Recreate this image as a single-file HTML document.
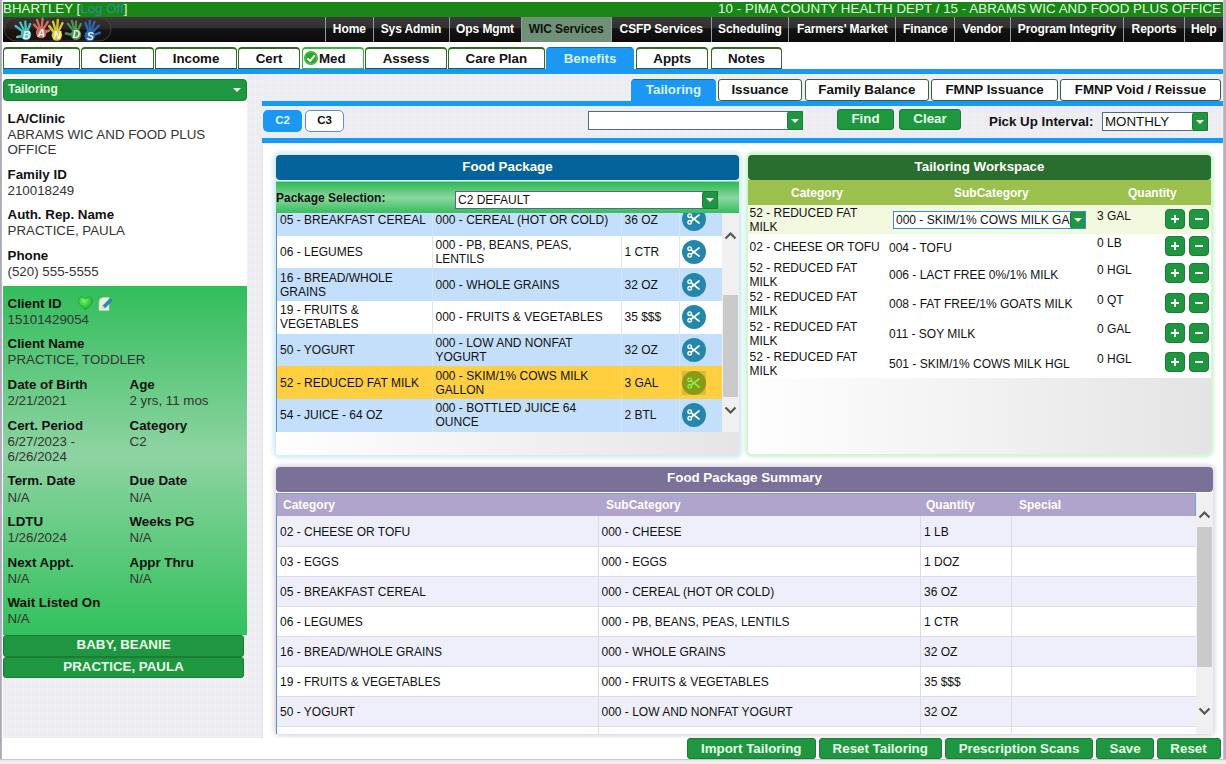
<!DOCTYPE html>
<html lang="en">
<head>
<meta charset="utf-8">
<title>HANDS - Tailoring</title>
<style>
*{box-sizing:border-box;}
html,body{margin:0;padding:0;}
body{width:1226px;height:764px;overflow:hidden;background:#fff;position:relative;
 font-family:"Liberation Sans",sans-serif;font-size:13.333px;color:#222;line-height:normal;}
.abs{position:absolute;}
#edgeL{left:0;top:0;width:2.4px;height:759px;background:linear-gradient(90deg,#a9a9b6,#b8b8c4);}
#edgeB{left:0;top:759.4px;width:1226px;height:5px;background:linear-gradient(#c4c4c6 0,#c9c9cb 1px,#eeeeee 1.6px,#f0f0f0 100%);}
#edgeR{left:1223px;top:0;width:3px;height:759.4px;background:linear-gradient(90deg,#c9c9d8,#b4b4c6 40%,#b0b0c0);}
#gbar{left:3px;top:2px;width:1220px;height:15px;background:#1a8618;color:#deffde;font-size:13.333px;line-height:14px;white-space:nowrap;}
#gbar .r{position:absolute;right:2px;top:0;letter-spacing:.045px;}
#gbar a{color:#2a8f93;text-decoration:none;}
#dbar{left:3px;top:16.6px;width:1220px;height:25px;background:linear-gradient(#3b3b3b 0,#303030 42%,#141212 48%,#0c0b0b 100%);overflow:hidden;}
#nav{position:absolute;left:0;top:0;height:25px;width:1220px;}
#nav span{position:absolute;top:0;text-align:center;display:block;height:25px;line-height:24px;padding:0;letter-spacing:-0.1px;border-left:1px solid #9a9a9a;color:#fff;font-weight:bold;font-size:12px;white-space:nowrap;}
#nav span.on{background:#6f9177;color:#111;}
/* main tabs */
#tabs{left:3px;top:47px;height:22px;width:1220px;}
.tab{position:absolute;top:0;text-align:center;height:22px;padding:0;border:1px solid #2f6b22;border-top:2px solid #2f6b22;border-bottom:1px solid #15605c;border-radius:4px 4px 0 0;background:#fff;
 font-weight:bold;font-size:13.333px;line-height:19px;color:#111;white-space:nowrap;}
.tab.on{background:#1b98f3;border-color:#1b98f3;border-top:1px solid #0f6fa8;color:#d8f3ff;line-height:21px;}
#subtabs .tab.on{line-height:20px;}
.band{background:#1b98f3;box-shadow:0 1px 0 #d4f5ff,0 -1px 0 #d4f5ff;}
.gridbg{background-color:#ececf1;background-image:linear-gradient(rgba(255,255,255,.2) 1px,transparent 1px),linear-gradient(90deg,rgba(255,255,255,.24) 1px,transparent 1px);background-size:8px 8px;}

/* sidebar */
#side{left:3px;top:74px;width:259px;height:663.5px;background-position:4px 6px;}
#sdd{left:3px;top:79px;width:244px;height:22px;background:#1f9640;border:1px solid #1b7d33;border-radius:4px;color:#e4ffe4;font-weight:bold;font-size:12px;line-height:18px;padding-left:4px;}
#sdd:after{content:"";position:absolute;right:5px;top:8px;border:4px solid transparent;border-top:4px solid #fff;border-bottom:none;}
#fam{left:3px;top:101px;width:244px;height:185px;background:#fff;padding:9.6px 0 0 4.5px;}
#cli{overflow:hidden;left:3px;top:286px;width:244px;height:349px;padding:9.6px 0 0 4.5px;background:linear-gradient(#31bd5b 0,#8ed4a2 48%,#31c15c 100%);}
.f{margin:0 0 9.3px 0;line-height:15.333px;color:#333;}
.f b{display:block;color:#111;padding-bottom:.7px;}
.row{display:flex;}
.row .f{width:122px;flex:none;}
.pbtn{left:3.3px;width:240.5px;height:21px;background:#1f9640;border:1px solid #1b7d33;border-radius:3px;color:#e9ffe9;font-weight:bold;font-size:13.333px;line-height:19px;text-align:center;}

/* main */
#mainbg{left:262px;top:143px;width:961px;height:595px;background:#fff;border-left:1px solid #e2e2e8;}
#subtabs{left:3px;top:79px;height:22px;width:1220px;z-index:2;}
.tab.sub{border:1px solid #3f5f38;border-radius:3px;height:22px;line-height:19px;}
#subtabs .tab.on{border-radius:4px 4px 0 0;}
.tab.med{border-color:#3cb33c;text-align:left;padding-left:16px;}
.btn{background:#1f9640;border:1px solid #1b7d33;border-radius:3px;color:#e9ffe9;font-weight:bold;font-size:13.333px;text-align:center;white-space:nowrap;}
.cbtn{top:110px;height:22px;width:39px;border-radius:5px;font-weight:bold;font-size:11.5px;line-height:20px;text-align:center;}
.sel{background:#fff;border:1px solid #4b6f7c;}
.sel i{position:absolute;right:-1px;top:-1px;bottom:-1px;width:16px;background:#1f9640;border:1px solid #1b7d33;border-radius:3px;}
.sel i:after{content:"";position:absolute;left:3px;top:50%;margin-top:-2px;border:4px solid transparent;border-top:4px solid #fff;border-bottom:none;}
.phead{border-radius:4px;color:#fff;font-weight:bold;font-size:13.333px;text-align:center;}
table{border-collapse:collapse;table-layout:fixed;font-size:12px;color:#111;}
td,th{padding:0 0 0 3px;overflow:hidden;}

/* food package */
#fpglow{left:276px;top:155px;width:463px;height:299.5px;border-radius:4px;background:linear-gradient(90deg,#fefefe 0,#f3f3f3 45%,#e5e5e5 100%);box-shadow:0 0 4px 3px #cfeaf5;}
#fph{left:276px;top:155px;width:463px;height:25px;background:#04639b;line-height:24px;}
#fps{left:276px;top:180px;width:463px;height:34px;background:linear-gradient(#e9f7fb 0,#e9f7fb 1px,#2fb855 2px,#52c472 25%,#8ad89f 52%,#5fca7d 75%,#33ba59 100%);}
#fps b{position:absolute;left:0;top:11px;font-size:12px;color:#111;line-height:14px;}
#fpt{left:276px;top:213px;width:446px;height:219px;overflow:hidden;border-left:1px solid #5a8fbe;}
#fpt table{width:445px;margin-top:-10px;}
#fpt td{height:32.7px;line-height:14px;border-left:1px solid #dfe6ee;background:#fff;}
#fpt td:first-child{border-left:none;}
#fpt tr.a td{background:#c4dffb;border-left-color:#d3e7fc;}
#fpt tr.s td{background:#ffcf40;border-left-color:#ffd65c;}
.sb{background:#f0f0f0;}
.sb u{position:absolute;left:.6px;width:15.4px;background:#cacaca;}
.sb svg{position:absolute;left:0;}
.sci{display:block;width:24px;height:24px;margin-left:0;}

/* workspace */
#wsglow{left:748px;top:155px;width:463px;height:299px;border-radius:4px;background:linear-gradient(90deg,#fefefe 0,#f3f3f3 45%,#e4e4e4 100%);box-shadow:0 0 3px 3px #cdf7d1;}
#wsh{left:748px;top:155px;width:463px;height:25px;background:#2a6e2f;line-height:24px;}
#wsc{left:748px;top:180px;width:463px;height:25px;background:#9bc04d;color:#fff;font-weight:bold;font-size:12px;line-height:26px;}
#wsc span{position:absolute;top:0;}
#wst{left:748px;top:205px;width:463px;}
.wr{position:relative;width:463px;background:#fff;font-size:12px;color:#111;line-height:14px;}
.wr span{position:absolute;}
.pm{position:absolute;top:50%;margin-top:-11px;width:20px;height:20px;border-radius:4px;background:#1f9640;border:1px solid #1b7d33;}
.pm:before{content:"";position:absolute;left:5px;top:8px;width:8px;height:2px;background:#fff;}
.pm.p:after{content:"";position:absolute;left:8px;top:5px;width:2px;height:8px;background:#fff;}
/* summary */
#smglow{left:276px;top:467.3px;width:937px;height:266.5px;border-radius:4px;box-shadow:0 0 5px 2px #d9d5e2;}
#smh{left:276px;top:467.3px;width:937px;height:24.7px;background:#7b7098;line-height:22.5px;}
#smc{left:276px;top:493px;width:920px;height:23px;background:#b0a4cc;color:#fff;font-weight:bold;font-size:12px;line-height:23px;border:1px solid #6f9fd0;border-bottom:none;}
#smc span{position:absolute;top:0;}
#smt{left:276px;top:516px;width:920px;height:217.5px;overflow:hidden;border-left:1px solid #5a8fbe;}
#smt table{width:919px;}
#smt td{height:30.05px;padding-top:2px;border-left:1px solid #dcdce4;border-bottom:1px solid #dcdce4;}
#smt td:first-child{border-left:none;}
#smt tr.a td{background:#efeffb;}
#bot{left:3px;top:738px;width:1220px;height:21px;background:#fff;}
#bot .btn{position:absolute;top:0;height:21px;line-height:19px;border-radius:3px;}
</style>
</head>
<body>
<div class="abs" id="edgeL"></div><div class="abs" id="edgeR"></div><div class="abs" id="edgeB"></div>
<div class="abs" id="gbar">BHARTLEY [<a>Log Off</a>]<span class="r">10 - PIMA COUNTY HEALTH DEPT / 15 - ABRAMS WIC AND FOOD PLUS OFFICE</span></div>
<div class="abs" id="dbar">
<svg class="abs" style="left:0;top:-0.6px" width="114" height="26" viewBox="3 16 114 26"><defs><linearGradient id="pg" x1="0" y1="0" x2="0" y2="1"><stop offset="0" stop-color="#3a3230"/><stop offset=".45" stop-color="#2c2624"/><stop offset=".55" stop-color="#1a1514"/><stop offset="1" stop-color="#171212"/></linearGradient></defs><rect x="4.5" y="17.5" width="106.5" height="23.5" rx="11.7" fill="url(#pg)" stroke="#4d4644" stroke-width="0.8"/><g fill="#52cccb" stroke="#52cccb" stroke-linecap="round" opacity=".92"><ellipse cx="26" cy="34.6" rx="5.2" ry="5.6" stroke="none"/><line x1="23.2" y1="31.9" x2="15.6" y2="26.0" stroke-width="2.3"/><line x1="24.4" y1="30.9" x2="20.2" y2="22.6" stroke-width="2.3"/><line x1="25.8" y1="30.5" x2="25.3" y2="21.7" stroke-width="2.3"/><line x1="27.4" y1="30.8" x2="30.2" y2="24.0" stroke-width="2.3"/><line x1="26.0" y1="35.5" x2="17.2" y2="37.0" stroke-width="2.6"/></g><g fill="#e4726a" stroke="#e4726a" stroke-linecap="round" opacity=".92"><ellipse cx="41.2" cy="32.7" rx="5.2" ry="5.6" stroke="none"/><line x1="38.8" y1="29.6" x2="34.0" y2="24.5" stroke-width="2.3"/><line x1="40.1" y1="28.8" x2="37.0" y2="19.8" stroke-width="2.3"/><line x1="41.6" y1="28.6" x2="42.6" y2="18.6" stroke-width="2.3"/><line x1="43.1" y1="29.2" x2="47.8" y2="21.8" stroke-width="2.3"/><line x1="41.2" y1="33.6" x2="49.0" y2="30.5" stroke-width="2.6"/></g><g fill="#e7d733" stroke="#e7d733" stroke-linecap="round" opacity=".92"><ellipse cx="56.9" cy="35.2" rx="5.2" ry="5.6" stroke="none"/><line x1="55.9" y1="31.2" x2="53.0" y2="21.6" stroke-width="2.3"/><line x1="57.1" y1="31.1" x2="57.8" y2="19.8" stroke-width="2.3"/><line x1="58.4" y1="31.4" x2="62.5" y2="23.0" stroke-width="2.3"/><line x1="56.9" y1="36.1" x2="49.4" y2="26.2" stroke-width="2.6"/></g><g fill="#4f9b54" stroke="#4f9b54" stroke-linecap="round" opacity=".92"><ellipse cx="76" cy="34.6" rx="5.2" ry="5.6" stroke="none"/><line x1="73.8" y1="31.3" x2="67.8" y2="23.6" stroke-width="2.3"/><line x1="74.9" y1="30.7" x2="71.8" y2="20.8" stroke-width="2.3"/><line x1="76.0" y1="30.5" x2="76.0" y2="21.6" stroke-width="2.3"/><line x1="77.5" y1="30.8" x2="80.7" y2="24.0" stroke-width="2.3"/><line x1="76.0" y1="35.5" x2="66.0" y2="33.4" stroke-width="2.6"/></g><g fill="#2b6fbd" stroke="#2b6fbd" stroke-linecap="round" opacity=".92"><ellipse cx="89.7" cy="35.7" rx="5.2" ry="5.6" stroke="none"/><line x1="88.6" y1="31.8" x2="85.5" y2="23.0" stroke-width="2.3"/><line x1="89.7" y1="31.6" x2="89.8" y2="20.8" stroke-width="2.3"/><line x1="90.9" y1="31.8" x2="94.5" y2="21.8" stroke-width="2.3"/><line x1="92.1" y1="32.6" x2="98.8" y2="25.5" stroke-width="2.3"/><line x1="89.7" y1="36.6" x2="99.8" y2="32.8" stroke-width="2.6"/></g><text x="22.8" y="39" font-family="Liberation Sans,sans-serif" font-size="10.5" font-weight="bold" font-style="italic" fill="#fff" fill-opacity=".9">B</text><text x="37.6" y="36.6" font-family="Liberation Sans,sans-serif" font-size="10.5" font-weight="bold" font-style="italic" fill="#fff" fill-opacity=".9">A</text><text x="53.4" y="39.2" font-family="Liberation Sans,sans-serif" font-size="10.5" font-weight="bold" font-style="italic" fill="#fff" fill-opacity=".9">N</text><text x="72.6" y="38.4" font-family="Liberation Sans,sans-serif" font-size="10.5" font-weight="bold" font-style="italic" fill="#fff" fill-opacity=".9">D</text><text x="86.8" y="39.8" font-family="Liberation Sans,sans-serif" font-size="10.5" font-weight="bold" font-style="italic" fill="#fff" fill-opacity=".9">S</text></svg>
<div id="nav"><span style="left:322.2px;width:47.3px">Home</span><span style="left:369.5px;width:76.0px">Sys Admin</span><span style="left:445.5px;width:72.1px">Ops Mgmt</span><span class="on" style="left:517.6px;width:90.3px">WIC Services</span><span style="left:607.9px;width:99.6px">CSFP Services</span><span style="left:707.5px;width:77.9px">Scheduling</span><span style="left:785.4px;width:106.9px">Farmers' Market</span><span style="left:892.3px;width:59.1px">Finance</span><span style="left:951.4px;width:55.1px">Vendor</span><span style="left:1006.5px;width:113.8px">Program Integrity</span><span style="left:1120.3px;width:60.2px">Reports</span><span style="left:1180.5px;width:39.5px">Help</span></div>
</div>
<div class="abs" id="tabs">
<div class="tab" style="left:0px;width:77px">Family</div><div class="tab" style="left:78.2px;width:72.9px">Client</div><div class="tab" style="left:152.4px;width:81.3px">Income</div><div class="tab" style="left:235.1px;width:61.8px">Cert</div><div class="tab med" style="left:299px;width:62px"><svg style="position:absolute;left:1px;top:1.8px" width="14" height="14" viewBox="0 0 14 14"><circle cx="7" cy="7" r="7" fill="#2aa82a"/><circle cx="7" cy="7" r="6" fill="none" stroke="#5fd05f" stroke-width=".8"/><path d="M3.3 7.4 L6 10 L10.8 4.4" fill="none" stroke="#fff" stroke-width="2"/></svg>Med</div><div class="tab" style="left:362.3px;width:81.4px">Assess</div><div class="tab" style="left:445px;width:96.7px">Care Plan</div><div class="tab on" style="left:543.4px;width:87.3px">Benefits</div><div class="tab" style="left:633.2px;width:72.1px">Appts</div><div class="tab" style="left:707.6px;width:71.8px">Notes</div>
</div>
<div class="abs band" style="left:3px;top:69px;width:1220px;height:5px;box-shadow:0 1px 0 #d4f5ff"></div>
<div class="abs gridbg" id="side"></div><div class="abs gridbg" style="left:262px;top:74px;width:961px;height:64px"></div>
<div class="abs" style="left:3px;top:75px;width:244px;height:4px;background:#f3f6ee"></div><div class="abs" id="sdd">Tailoring</div>
<div class="abs" id="fam">
<div class="f"><b>LA/Clinic</b>ABRAMS WIC AND FOOD PLUS<br>OFFICE</div>
<div class="f"><b>Family ID</b>210018249</div>
<div class="f"><b>Auth. Rep. Name</b>PRACTICE, PAULA</div>
<div class="f"><b>Phone</b>(520) 555-5555</div>
</div>
<div class="abs" id="cli">
<div class="f"><b>Client ID<svg style="position:absolute;left:74.5px;top:9.5px" width="38" height="16" viewBox="0 0 38 16"><defs><radialGradient id="hg" cx=".4" cy=".3" r=".8"><stop offset="0" stop-color="#7cf07c"/><stop offset=".5" stop-color="#35cf3c"/><stop offset="1" stop-color="#1a9a2a"/></radialGradient></defs><path d="M7.5 13.8 C2 9.5 0.6 7.3 0.6 4.8 C0.6 2.6 2.2 1 4.2 1 C5.7 1 6.9 1.9 7.5 3.1 C8.1 1.9 9.3 1 10.8 1 C12.8 1 14.4 2.6 14.4 4.8 C14.4 7.3 13 9.5 7.5 13.8 Z" fill="url(#hg)" stroke="#1f9a2e" stroke-width=".7"/><path d="M21 14.5 L21 6 Q21 2 25 1.5 L31 1.5 L31 14.5 Z" fill="#e9f2dc" stroke="#c4d4b4" stroke-width=".6"/><path d="M23.6 13 L24.6 9.6 L31.2 3 Q32.6 2 33.8 3.2 Q34.8 4.4 33.8 5.6 L27.2 12.2 Z" fill="#2b8ab0"/><path d="M23.6 13 L24.6 9.6 L27.2 12.2 Z" fill="#f3e3bd"/></svg></b>15101429054</div>
<div class="f"><b>Client Name</b>PRACTICE, TODDLER</div>
<div class="row"><div class="f"><b>Date of Birth</b>2/21/2021</div><div class="f"><b>Age</b>2 yrs, 11 mos</div></div>
<div class="row"><div class="f"><b>Cert. Period</b>6/27/2023 -<br>6/26/2024</div><div class="f"><b>Category</b>C2</div></div>
<div class="row"><div class="f"><b>Term. Date</b>N/A</div><div class="f"><b>Due Date</b>N/A</div></div>
<div class="row"><div class="f"><b>LDTU</b>1/26/2024</div><div class="f"><b>Weeks PG</b>N/A</div></div>
<div class="row"><div class="f"><b>Next Appt.</b>N/A</div><div class="f"><b>Appr Thru</b>N/A</div></div>
<div class="f"><b>Wait Listed On</b>N/A</div>
</div>
<div class="abs pbtn" style="top:635px;height:21.6px;line-height:18px">BABY, BEANIE</div>
<div class="abs pbtn" style="top:657.2px;height:20.4px;line-height:18.5px">PRACTICE, PAULA</div>

<div class="abs" id="mainbg"></div>
<div class="abs" id="subtabs"><div class="tab on" style="left:628.4px;width:84.2px">Tailoring</div><div class="tab sub" style="left:714.9px;width:84.1px">Issuance</div><div class="tab sub" style="left:801.6px;width:124.6px">Family Balance</div><div class="tab sub" style="left:928.2px;width:126.8px">FMNP Issuance</div><div class="tab sub" style="left:1057.3px;width:160.4px">FMNP Void / Reissue</div></div>
<div class="abs band" style="left:262px;top:100.7px;width:961px;height:5px"></div>
<div class="abs cbtn" style="left:263px;background:#1b98f3;color:#e4f6ff;">C2</div>
<div class="abs cbtn" style="left:305px;background:#fff;border:1px solid #5b93c0;color:#111;line-height:18px;">C3</div>
<div class="abs sel" style="left:588px;top:111px;width:215px;height:19px"><i></i></div>
<div class="abs btn" style="left:837px;top:109px;width:57px;height:21px;line-height:18px">Find</div>
<div class="abs btn" style="left:899px;top:109px;width:62px;height:21px;line-height:18px">Clear</div>
<div class="abs" style="left:989px;top:114px;font-weight:bold;color:#111;line-height:16px">Pick Up Interval:</div>
<div class="abs sel" style="left:1102px;top:112px;width:106px;height:19px;line-height:17px;padding-left:2px;color:#111">MONTHLY<i></i></div>
<div class="abs band" style="left:262px;top:138px;width:961px;height:5px"></div>
<div class="abs" id="fpglow"></div>
<div class="abs phead" id="fph">Food Package</div>
<div class="abs" id="fps"><b>Package Selection:</b><div class="abs sel" style="left:179px;top:11px;width:263px;height:18px;font-size:12px;line-height:16px;padding-left:2px;color:#111">C2 DEFAULT<i></i></div></div>
<div class="abs" id="fpt"><table><colgroup><col style="width:155px"><col style="width:189px"><col style="width:58px"><col style="width:43px"></colgroup><tr class="a"><td style="padding-top:2px">05 - BREAKFAST CEREAL</td><td style="padding-top:2px">000 - CEREAL (HOT OR COLD)</td><td style="padding-top:2px">36 OZ</td><td style="padding-left:2.5px"><svg class="sci" viewBox="0 0 24 24"><circle cx="12" cy="12" r="12" fill="#2386ad"/><g fill="none" stroke="#fff" stroke-width="1.4" stroke-linecap="round"><circle cx="7.7" cy="8.7" r="1.8"/><circle cx="7.7" cy="15.3" r="1.8"/><path d="M9.2 9.8 L17 16 M9.2 14.2 L17 8" stroke-width="1.7"/></g></svg></td></tr><tr class=""><td>06 - LEGUMES</td><td>000 - PB, BEANS, PEAS,<br>LENTILS</td><td>1 CTR</td><td style="padding-left:2.5px"><svg class="sci" viewBox="0 0 24 24"><circle cx="12" cy="12" r="12" fill="#2386ad"/><g fill="none" stroke="#fff" stroke-width="1.4" stroke-linecap="round"><circle cx="7.7" cy="8.7" r="1.8"/><circle cx="7.7" cy="15.3" r="1.8"/><path d="M9.2 9.8 L17 16 M9.2 14.2 L17 8" stroke-width="1.7"/></g></svg></td></tr><tr class="a"><td>16 - BREAD/WHOLE<br>GRAINS</td><td>000 - WHOLE GRAINS</td><td>32 OZ</td><td style="padding-left:2.5px"><svg class="sci" viewBox="0 0 24 24"><circle cx="12" cy="12" r="12" fill="#2386ad"/><g fill="none" stroke="#fff" stroke-width="1.4" stroke-linecap="round"><circle cx="7.7" cy="8.7" r="1.8"/><circle cx="7.7" cy="15.3" r="1.8"/><path d="M9.2 9.8 L17 16 M9.2 14.2 L17 8" stroke-width="1.7"/></g></svg></td></tr><tr class=""><td>19 - FRUITS &amp;<br>VEGETABLES</td><td>000 - FRUITS &amp; VEGETABLES</td><td>35 $$$</td><td style="padding-left:2.5px"><svg class="sci" viewBox="0 0 24 24"><circle cx="12" cy="12" r="12" fill="#2386ad"/><g fill="none" stroke="#fff" stroke-width="1.4" stroke-linecap="round"><circle cx="7.7" cy="8.7" r="1.8"/><circle cx="7.7" cy="15.3" r="1.8"/><path d="M9.2 9.8 L17 16 M9.2 14.2 L17 8" stroke-width="1.7"/></g></svg></td></tr><tr class="a"><td>50 - YOGURT</td><td>000 - LOW AND NONFAT<br>YOGURT</td><td>32 OZ</td><td style="padding-left:2.5px"><svg class="sci" viewBox="0 0 24 24"><circle cx="12" cy="12" r="12" fill="#2386ad"/><g fill="none" stroke="#fff" stroke-width="1.4" stroke-linecap="round"><circle cx="7.7" cy="8.7" r="1.8"/><circle cx="7.7" cy="15.3" r="1.8"/><path d="M9.2 9.8 L17 16 M9.2 14.2 L17 8" stroke-width="1.7"/></g></svg></td></tr><tr class="s"><td>52 - REDUCED FAT MILK</td><td>000 - SKIM/1% COWS MILK<br>GALLON</td><td>3 GAL</td><td style="padding-left:2.5px"><svg class="sci" viewBox="0 0 24 24"><rect width="24" height="24" fill="#dcb93a"/><circle cx="12" cy="12" r="12" fill="#8a9a16"/><g fill="none" stroke="#8fe94f" stroke-width="1.4" stroke-linecap="round"><circle cx="7.7" cy="8.7" r="1.8"/><circle cx="7.7" cy="15.3" r="1.8"/><path d="M9.2 9.8 L17 16 M9.2 14.2 L17 8" stroke-width="1.7"/></g></svg></td></tr><tr class="a"><td>54 - JUICE - 64 OZ</td><td>000 - BOTTLED JUICE 64<br>OUNCE</td><td>2 BTL</td><td style="padding-left:2.5px"><svg class="sci" viewBox="0 0 24 24"><circle cx="12" cy="12" r="12" fill="#2386ad"/><g fill="none" stroke="#fff" stroke-width="1.4" stroke-linecap="round"><circle cx="7.7" cy="8.7" r="1.8"/><circle cx="7.7" cy="15.3" r="1.8"/><path d="M9.2 9.8 L17 16 M9.2 14.2 L17 8" stroke-width="1.7"/></g></svg></td></tr></table></div>
<div class="abs sb" style="left:722px;top:213px;width:17px;height:219px"><svg width="17" height="12" viewBox="0 0 17 12" style="top:17px"><path d="M3.5 8.5 L8.5 3.5 L13.5 8.5" fill="none" stroke="#555" stroke-width="2.2"/></svg><u style="top:82px;height:102px"></u><svg width="17" height="12" viewBox="0 0 17 12" style="top:191px"><path d="M3.5 3.5 L8.5 8.5 L13.5 3.5" fill="none" stroke="#555" stroke-width="2.2"/></svg></div>

<div class="abs" id="wsglow"></div>
<div class="abs phead" id="wsh">Tailoring Workspace</div>
<div class="abs" id="wsc"><span style="left:43px">Category</span><span style="left:206px">SubCategory</span><span style="left:380px">Quantity</span></div>
<div class="abs" id="wst"><div class="wr" style="height:29px;background:#f2f9df"><span style="left:1.5px;top:0.5px">52 - REDUCED FAT<br>MILK</span><div class="abs sel" style="border-color:#3d8bd0;left:145px;top:6px;width:193px;height:18px;line-height:16px;padding-left:2px;white-space:nowrap;overflow:hidden">000 - SKIM/1% COWS MILK GA<i></i></div><span style="left:349px;top:3.5px">3 GAL</span><div class="pm p" style="left:417px"></div><div class="pm" style="left:441px"></div></div><div class="wr" style="height:25.5px;background:#fff"><span style="left:1.5px;top:6.45px">02 - CHEESE OR TOFU</span><span style="left:141px;top:6.75px">004 - TOFU</span><span style="left:349px;top:1.75px">0 LB</span><div class="pm p" style="left:417px"></div><div class="pm" style="left:441px"></div></div><div class="wr" style="height:29.5px;background:#fff"><span style="left:1.5px;top:1.45px">52 - REDUCED FAT<br>MILK</span><span style="left:141px;top:8.75px">006 - LACT FREE 0%/1% MILK</span><span style="left:349px;top:3.75px">0 HGL</span><div class="pm p" style="left:417px"></div><div class="pm" style="left:441px"></div></div><div class="wr" style="height:29.5px;background:#fff"><span style="left:1.5px;top:1.45px">52 - REDUCED FAT<br>MILK</span><span style="left:141px;top:8px">008 - FAT FREE/1% GOATS MILK</span><span style="left:349px;top:3.75px">0 QT</span><div class="pm p" style="left:417px"></div><div class="pm" style="left:441px"></div></div><div class="wr" style="height:30px;background:#fff"><span style="left:1.5px;top:1.7px">52 - REDUCED FAT<br>MILK</span><span style="left:141px;top:8px">011 - SOY MILK</span><span style="left:349px;top:3.1px">0 GAL</span><div class="pm p" style="left:417px"></div><div class="pm" style="left:441px"></div></div><div class="wr" style="height:29.5px;background:#fff"><span style="left:1.5px;top:1.45px">52 - REDUCED FAT<br>MILK</span><span style="left:141px;top:8.75px">501 - SKIM/1% COWS MILK HGL</span><span style="left:349px;top:3.75px">0 HGL</span><div class="pm p" style="left:417px"></div><div class="pm" style="left:441px"></div></div></div>

<div class="abs" id="smglow"></div>
<div class="abs phead" id="smh">Food Package Summary</div>
<div class="abs" id="smc"><span style="left:6px">Category</span><span style="left:329px">SubCategory</span><span style="left:649px">Quantity</span><span style="left:742px">Special</span></div>
<div class="abs" id="smt"><table><colgroup><col style="width:321px"><col style="width:322.5px"><col style="width:91px"><col style="width:184.5px"></colgroup><tr class="a"><td>02 - CHEESE OR TOFU</td><td>000 - CHEESE</td><td>1 LB</td><td></td></tr><tr class=""><td>03 - EGGS</td><td>000 - EGGS</td><td>1 DOZ</td><td></td></tr><tr class="a"><td style="padding-top:2px">05 - BREAKFAST CEREAL</td><td style="padding-top:2px">000 - CEREAL (HOT OR COLD)</td><td style="padding-top:2px">36 OZ</td><td></td></tr><tr class=""><td>06 - LEGUMES</td><td>000 - PB, BEANS, PEAS, LENTILS</td><td>1 CTR</td><td></td></tr><tr class="a"><td>16 - BREAD/WHOLE GRAINS</td><td>000 - WHOLE GRAINS</td><td>32 OZ</td><td></td></tr><tr class=""><td>19 - FRUITS &amp; VEGETABLES</td><td>000 - FRUITS &amp; VEGETABLES</td><td>35 $$$</td><td></td></tr><tr class="a"><td>50 - YOGURT</td><td>000 - LOW AND NONFAT YOGURT</td><td>32 OZ</td><td></td></tr><tr class=""><td></td><td></td><td></td><td></td></tr></table></div>
<div class="abs sb" style="left:1196px;top:493px;width:17px;height:240.5px"><svg width="17" height="12" viewBox="0 0 17 12" style="top:16px"><path d="M3.5 8.5 L8.5 3.5 L13.5 8.5" fill="none" stroke="#555" stroke-width="2.2"/></svg><u style="top:34px;height:140px"></u><svg width="17" height="12" viewBox="0 0 17 12" style="top:212px"><path d="M3.5 3.5 L8.5 8.5 L13.5 3.5" fill="none" stroke="#555" stroke-width="2.2"/></svg></div>

<div class="abs" id="bot">
<div class="btn" style="left:684px;width:128.5px">Import Tailoring</div>
<div class="btn" style="left:815.5px;width:123.5px">Reset Tailoring</div>
<div class="btn" style="left:942px;width:148px">Prescription Scans</div>
<div class="btn" style="left:1093.3px;width:57.7px">Save</div>
<div class="btn" style="left:1153.5px;width:64px">Reset</div>
</div>

</body>
</html>
